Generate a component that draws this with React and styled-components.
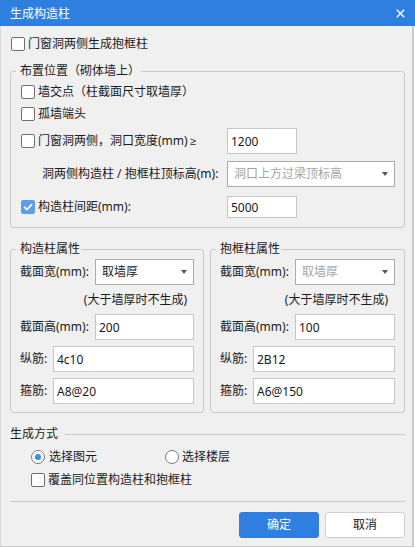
import React from 'react';
import styled, { createGlobalStyle } from 'styled-components';

const GlobalStyle = createGlobalStyle`
  * { box-sizing: border-box; }
  html, body { margin: 0; padding: 0; background: #ffffff; }
  body {
    font-family: "Noto Sans", "Noto Sans CJK SC", sans-serif;
    font-size: 12px;
    line-height: 16px;
    color: #1a1a1a;
  }
`;

const Window = styled.div`
  width: 415px;
  height: 548px;
  display: flex;
  flex-direction: column;
  background: #ffffff;
`;

const TitleBar = styled.header`
  height: 26px;
  flex: none;
  background: #2e7fe0;
  color: #ffffff;
  display: flex;
  align-items: center;
  justify-content: space-between;
  padding: 0 10px;
`;

const TitleText = styled.span`
  padding-top: 2px;
`;

const CloseIcon = styled.svg`
  width: 9px;
  height: 9px;
  display: block;
`;

const Body = styled.main`
  flex: 1;
  margin: 0 1px 1px 0;
  background: #f0f0f0;
  border-left: 1px solid #d6d6d6;
  border-right: 2px solid #cbcbcb;
  border-bottom: 1px solid #cbcbcb;
  padding: 6px 7px 0 9px;
  display: flex;
  flex-direction: column;
`;

const Row = styled.div`
  display: flex;
  align-items: center;
  flex: none;
  height: ${(p) => p.$h || 22}px;
  margin-top: ${(p) => p.$mt || 0}px;
  padding-left: ${(p) => p.$pl || 0}px;
  padding-right: ${(p) => p.$pr || 0}px;
  justify-content: ${(p) => (p.$end ? 'flex-end' : 'flex-start')};
`;

const CheckLabel = styled.label`
  display: flex;
  align-items: center;
  gap: 3px;
  white-space: nowrap;
  width: ${(p) => (p.$w ? `${p.$w}px` : 'auto')};
  flex: none;
`;

const Symbol = styled.span`
  font-family: "Liberation Sans", "DejaVu Sans", sans-serif;
  font-size: 11px;
  margin-left: 2px;
`;

const Box = styled.span`
  width: 14px;
  height: 14px;
  flex: none;
  border-radius: 2px;
  border: 1px solid ${(p) => (p.$on ? '#5b9ee9' : '#6f6f6f')};
  background: ${(p) => (p.$on ? '#5b9ee9' : '#ffffff')};
  display: flex;
  align-items: center;
  justify-content: center;
`;

const RadioItem = styled.label`
  display: flex;
  align-items: center;
  gap: ${(p) => p.$gap || 4}px;
  width: 134px;
  flex: none;
  white-space: nowrap;
`;

const RadioCircle = styled.span`
  width: 14px;
  height: 14px;
  flex: none;
  border-radius: 50%;
  border: 1px solid #7a7a7a;
  background: #ffffff;
  display: flex;
  align-items: center;
  justify-content: center;
  &::after {
    content: '';
    width: 6px;
    height: 6px;
    border-radius: 50%;
    background: ${(p) => (p.$on ? '#3c8deb' : 'transparent')};
  }
`;

const Label = styled.span`
  flex: none;
  white-space: nowrap;
  width: ${(p) => (p.$w ? `${p.$w}px` : 'auto')};
  padding-left: ${(p) => p.$pl || 0}px;
`;

const TextInput = styled.input`
  font: inherit;
  color: #1a1a1a;
  height: ${(p) => p.$h || 26}px;
  width: ${(p) => (p.$w ? `${p.$w}px` : 'auto')};
  flex: ${(p) => (p.$w ? 'none' : '1')};
  min-width: 0;
  margin: 0;
  background: #ffffff;
  border: 1px solid #c6c6c6;
  border-radius: 0;
  padding: 0 3px;
  outline: none;
`;

const Select = styled.div`
  flex: 1;
  min-width: 0;
  height: 26px;
  background: #ffffff;
  border: 1px solid #aaaaaa;
  display: flex;
  align-items: center;
  justify-content: space-between;
  padding: 0 6px;
  color: ${(p) => (p.$disabled ? '#a4a4a4' : '#1a1a1a')};
  white-space: nowrap;
`;

const Caret = styled.span`
  width: 0;
  height: 0;
  border-left: 3.5px solid transparent;
  border-right: 3.5px solid transparent;
  border-top: 4px solid #555555;
  flex: none;
`;

const Group = styled.fieldset`
  margin: ${(p) => p.$mt || 0}px 0 0;
  padding: 0;
  min-width: 0;
  border: 1px solid #c9c9c9;
  border-radius: 3px;
`;

const Legend = styled.legend`
  margin-left: 5px;
  padding: 0 1px 0 4px;
  line-height: 16px;
  height: 16px;
`;

const GroupBody = styled.div`
  display: flex;
  flex-direction: column;
  padding: ${(p) => p.$pad};
`;

const PropGrid = styled.div`
  display: grid;
  grid-template-columns: 194px 195px;
  column-gap: 6px;
  margin-top: 13px;
`;

const SectionHead = styled.div`
  display: flex;
  align-items: center;
  height: 18px;
  margin-top: 12px;
  flex: none;
`;

const Rule = styled.div`
  flex: 1;
  height: 1px;
  background: #c9c9c9;
  margin-left: ${(p) => p.$ml || 0}px;
`;

const ButtonRow = styled.div`
  display: flex;
  justify-content: flex-end;
  gap: 6px;
  margin-top: 10px;
  flex: none;
`;

const Button = styled.button`
  font: inherit;
  width: 80px;
  height: 26px;
  margin: 0;
  border-radius: 3px;
  border: 1px solid ${(p) => (p.$primary ? '#2e7fe0' : '#cfcfcf')};
  background: ${(p) => (p.$primary ? '#2e7fe0' : '#ffffff')};
  color: ${(p) => (p.$primary ? '#ffffff' : '#1a1a1a')};
  padding: 0;
`;

function Check({ on }) {
  return (
    <Box $on={on}>
      {on && (
        <svg width="10" height="10" viewBox="0 0 10 10">
          <path d="M1.5 5.2 L4 7.5 L8.6 2.6" fill="none" stroke="#fff" strokeWidth="1.8" strokeLinecap="round" strokeLinejoin="round" />
        </svg>
      )}
    </Box>
  );
}

function PropPanel({ title, widthDisabled, height, zong, gu }) {
  return (
    <Group>
      <Legend>{title}</Legend>
      <GroupBody $pad="2px 9px 8px 9px">
        <Row $h={26}>
          <Label $w={75}>截面宽(mm):</Label>
          <Select $disabled={widthDisabled}>
            <span>取墙厚</span>
            <Caret />
          </Select>
        </Row>
        <Row $h={29} $end $pr={7}>
          <Label>(大于墙厚时不生成)</Label>
        </Row>
        <Row $h={26}>
          <Label $w={75}>截面高(mm):</Label>
          <TextInput defaultValue={height} />
        </Row>
        <Row $h={26} $mt={6}>
          <Label $w={33}>纵筋:</Label>
          <TextInput defaultValue={zong} />
        </Row>
        <Row $h={26} $mt={6}>
          <Label $w={33}>箍筋:</Label>
          <TextInput defaultValue={gu} />
        </Row>
      </GroupBody>
    </Group>
  );
}

export default function App() {
  return (
    <>
      <GlobalStyle />
      <Window>
        <TitleBar>
          <TitleText>生成构造柱</TitleText>
          <CloseIcon viewBox="0 0 9 9">
            <path d="M0.8 0.8 L8.2 8.2 M8.2 0.8 L0.8 8.2" stroke="#fff" strokeWidth="1.5" />
          </CloseIcon>
        </TitleBar>
        <Body>
          <Row $h={24} $pl={1}>
            <CheckLabel>
              <Check />
              门窗洞两侧生成抱框柱
            </CheckLabel>
          </Row>

          <Group $mt={7}>
            <Legend>布置位置（砌体墙上）</Legend>
            <GroupBody $pad="2px 9px 9px 10px">
              <Row $h={22}>
                <CheckLabel>
                  <Check />
                  墙交点（柱截面尺寸取墙厚）
                </CheckLabel>
              </Row>
              <Row $h={22}>
                <CheckLabel>
                  <Check />
                  孤墙端头
                </CheckLabel>
              </Row>
              <Row $h={26} $mt={3}>
                <CheckLabel $w={206}>
                  <Check />
                  <span>
                    门窗洞两侧，洞口宽度(mm)<Symbol>≥</Symbol>
                  </span>
                </CheckLabel>
                <TextInput $w={70} defaultValue="1200" />
              </Row>
              <Row $h={26} $mt={7}>
                <Label $w={206} $pl={21}>洞两侧构造柱 / 抱框柱顶标高(m):</Label>
                <Select $disabled>
                  <span>洞口上方过梁顶标高</span>
                  <Caret />
                </Select>
              </Row>
              <Row $h={22} $mt={9}>
                <CheckLabel $w={206}>
                  <Check on />
                  构造柱间距(mm):
                </CheckLabel>
                <TextInput $w={70} $h={22} defaultValue="5000" />
              </Row>
            </GroupBody>
          </Group>

          <PropGrid>
            <PropPanel title="构造柱属性" height="200" zong="4c10" gu="A8@20" />
            <PropPanel title="抱框柱属性" widthDisabled height="100" zong="2B12" gu="A6@150" />
          </PropGrid>

          <SectionHead>
            <Label>生成方式</Label>
            <Rule $ml={7} />
          </SectionHead>
          <Row $h={20} $mt={4} $pl={21}>
            <RadioItem>
              <RadioCircle $on />
              选择图元
            </RadioItem>
            <RadioItem $gap={3}>
              <RadioCircle />
              选择楼层
            </RadioItem>
          </Row>
          <Row $h={20} $mt={3} $pl={21}>
            <CheckLabel>
              <Check />
              覆盖同位置构造柱和抱框柱
            </CheckLabel>
          </Row>
          <Row $h={1} $mt={11}>
            <Rule />
          </Row>
          <ButtonRow>
            <Button $primary>确定</Button>
            <Button>取消</Button>
          </ButtonRow>
        </Body>
      </Window>
    </>
  );
}
